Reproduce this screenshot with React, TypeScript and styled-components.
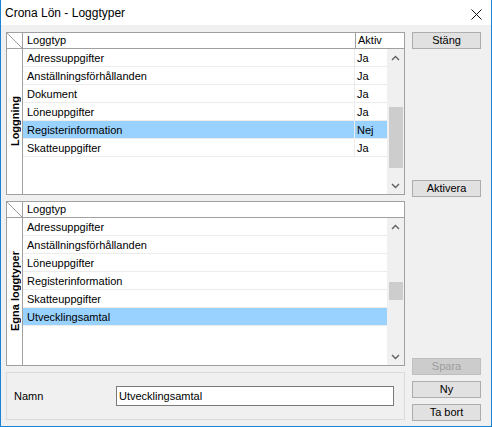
import React from "react";
import styled, { createGlobalStyle } from "styled-components";

const GlobalStyle = createGlobalStyle`
  html, body {
    margin: 0;
    padding: 0;
    background: #ffffff;
  }
  body {
    font-family: "Liberation Sans", Arial, sans-serif;
    font-size: 11px;
    color: #000000;
  }
`;

type LogRow = {
  name: string;
  active?: string;
  selected?: boolean;
};

const loggning: LogRow[] = [
  { name: "Adressuppgifter", active: "Ja" },
  { name: "Anställningsförhållanden", active: "Ja" },
  { name: "Dokument", active: "Ja" },
  { name: "Löneuppgifter", active: "Ja" },
  { name: "Registerinformation", active: "Nej", selected: true },
  { name: "Skatteuppgifter", active: "Ja" },
];

const egna: LogRow[] = [
  { name: "Adressuppgifter" },
  { name: "Anställningsförhållanden" },
  { name: "Löneuppgifter" },
  { name: "Registerinformation" },
  { name: "Skatteuppgifter" },
  { name: "Utvecklingsamtal", selected: true },
];

type GridProps = {
  label: string;
  rows: LogRow[];
  height: number;
  withActive?: boolean;
  thumbTop: number;
  thumbSize: number;
};

const LogGrid: React.FC<GridProps> = ({
  label,
  rows,
  height,
  withActive,
  thumbTop,
  thumbSize,
}) => {
  return (
    <GridBox $height={height}>
      <Corner>
        <svg width="15" height="15" viewBox="0 0 15 15">
          <line x1="0" y1="0" x2="15" y2="15" stroke="#a0a0a0" strokeWidth="1" />
        </svg>
      </Corner>
      <HeaderRow>
        <HeaderCell>Loggtyp</HeaderCell>
        {withActive && <ActiveHeader>Aktiv</ActiveHeader>}
      </HeaderRow>
      <RowHeader>
        <VerticalLabel>{label}</VerticalLabel>
      </RowHeader>
      <BodyArea>
        <Rows>
          {rows.map((r, idx) => (
            <Row key={idx} $selected={r.selected}>
              <NameCell $full={!withActive}>{r.name}</NameCell>
              {withActive && <ActiveCell>{r.active}</ActiveCell>}
            </Row>
          ))}
        </Rows>
        <ScrollBar>
          <ScrollArrow>
            <svg width="9" height="6" viewBox="0 0 9 6">
              <polyline points="1,5 4.5,1.5 8,5" fill="none" stroke="#606060" strokeWidth="1.4" />
            </svg>
          </ScrollArrow>
          <Track>
            <Thumb $top={thumbTop} $size={thumbSize} />
          </Track>
          <ScrollArrow>
            <svg width="9" height="6" viewBox="0 0 9 6">
              <polyline points="1,1 4.5,4.5 8,1" fill="none" stroke="#606060" strokeWidth="1.4" />
            </svg>
          </ScrollArrow>
        </ScrollBar>
      </BodyArea>
    </GridBox>
  );
};

const App: React.FC = () => {
  return (
    <>
      <GlobalStyle />
      <Window>
        <TitleBar>
          <Title>Crona Lön - Loggtyper</Title>
          <CloseIcon>
            <svg width="11" height="11" viewBox="0 0 11 11">
              <line x1="0.5" y1="0.5" x2="10.5" y2="10.5" stroke="#111" strokeWidth="1" />
              <line x1="10.5" y1="0.5" x2="0.5" y2="10.5" stroke="#111" strokeWidth="1" />
            </svg>
          </CloseIcon>
        </TitleBar>
        <Body>
          <LeftColumn>
            <LogGrid
              label="Loggning"
              rows={loggning}
              height={163}
              withActive
              thumbTop={41}
              thumbSize={61}
            />
            <LogGrid
              label="Egna loggtyper"
              rows={egna}
              height={165}
              thumbTop={47}
              thumbSize={18}
            />
            <NamePanel>
              <NameLabel>Namn</NameLabel>
              <NameInput defaultValue="Utvecklingsamtal" />
            </NamePanel>
          </LeftColumn>
          <RightColumn>
            <Button>Stäng</Button>
            <Button $top={131}>Aktivera</Button>
            <BottomButtons>
              <Button disabled>Spara</Button>
              <Button>Ny</Button>
              <Button>Ta bort</Button>
            </BottomButtons>
          </RightColumn>
        </Body>
      </Window>
    </>
  );
};

export default App;

const Window = styled.div`
  width: 492px;
  height: 427px;
  box-sizing: border-box;
  border: 1px solid #1883d7;
  border-top: none;
  display: flex;
  flex-direction: column;
  background: #f0f0f0;
`;

const TitleBar = styled.div`
  height: 25px;
  flex: none;
  background: #ffffff;
  display: flex;
  align-items: center;
  justify-content: space-between;
  padding: 0 9px 0 4px;
`;

const Title = styled.div`
  font-size: 12px;
  margin-top: 1px;
`;

const CloseIcon = styled.div`
  display: flex;
  margin-top: 3px;
`;

const Body = styled.div`
  flex: 1;
  display: flex;
  gap: 7px;
  padding: 7px 0 5px 5px;
`;

const LeftColumn = styled.div`
  width: 399px;
  display: flex;
  flex-direction: column;
  gap: 6px;
`;

const GridBox = styled.div<{ $height: number }>`
  height: ${(p) => p.$height}px;
  box-sizing: border-box;
  border: 1px solid #a0a0a0;
  background: #ffffff;
  display: grid;
  grid-template-columns: 16px 1fr;
  grid-template-rows: 16px 1fr;
`;

const Corner = styled.div`
  box-sizing: border-box;
  border-right: 1px solid #a0a0a0;
  border-bottom: 1px solid #a0a0a0;
  overflow: hidden;
  display: flex;
`;

const HeaderRow = styled.div`
  box-sizing: border-box;
  border-bottom: 1px solid #a0a0a0;
  display: flex;
`;

const HeaderCell = styled.div`
  flex: 1;
  padding-left: 4px;
  line-height: 15px;
`;

const ActiveHeader = styled.div`
  width: 49px;
  border-left: 1px solid #a0a0a0;
  padding-left: 2px;
  box-sizing: border-box;
  line-height: 15px;
`;

const RowHeader = styled.div`
  box-sizing: border-box;
  border-right: 1px solid #a0a0a0;
  display: flex;
  align-items: center;
  justify-content: center;
`;

const VerticalLabel = styled.div`
  writing-mode: vertical-rl;
  transform: rotate(180deg);
  font-weight: bold;
  font-size: 11px;
  white-space: nowrap;
`;

const BodyArea = styled.div`
  display: flex;
  min-height: 0;
`;

const Rows = styled.div`
  flex: 1;
  display: flex;
  flex-direction: column;
`;

const Row = styled.div<{ $selected?: boolean }>`
  height: 18px;
  box-sizing: border-box;
  border-bottom: 1px solid #ececec;
  background: ${(p) => (p.$selected ? "#99d1ff" : "#ffffff")};
  display: flex;
  align-items: center;
`;

const NameCell = styled.div<{ $full?: boolean }>`
  width: ${(p) => (p.$full ? "auto" : "331px")};
  flex: ${(p) => (p.$full ? 1 : "none")};
  padding-left: 4px;
  box-sizing: border-box;
  white-space: nowrap;
`;

const ActiveCell = styled.div`
  flex: 1;
  align-self: stretch;
  display: flex;
  align-items: center;
  border-left: 1px solid #ececec;
  padding-left: 2px;
`;

const ScrollBar = styled.div`
  width: 17px;
  flex: none;
  background: #f0f0f0;
  display: flex;
  flex-direction: column;
`;

const ScrollArrow = styled.div`
  height: 17px;
  flex: none;
  display: flex;
  align-items: center;
  justify-content: center;
`;

const Track = styled.div`
  flex: 1;
  display: flex;
  flex-direction: column;
`;

const Thumb = styled.div<{ $top: number; $size: number }>`
  margin: ${(p) => p.$top}px 1px 0 2px;
  height: ${(p) => p.$size}px;
  background: #cdcdcd;
`;

const NamePanel = styled.div`
  height: 48px;
  box-sizing: border-box;
  border: 1px solid #dadada;
  display: flex;
  align-items: center;
  padding: 0 10px 1px 7px;
`;

const NameLabel = styled.div`
  width: 102px;
  flex: none;
`;

const NameInput = styled.input`
  flex: 1;
  height: 20px;
  box-sizing: border-box;
  border: 1px solid #7a7a7a;
  background: #ffffff;
  padding: 0 2px;
  font-family: "Liberation Sans", Arial, sans-serif;
  font-size: 11px;
  color: #000000;
  outline: none;
`;

const RightColumn = styled.div`
  width: 69px;
  display: flex;
  flex-direction: column;
`;

const BottomButtons = styled.div`
  margin-top: auto;
  display: flex;
  flex-direction: column;
  gap: 6px;
`;

const Button = styled.button<{ $top?: number }>`
  height: 17px;
  margin-top: ${(p) => p.$top ?? 0}px;
  box-sizing: border-box;
  border: 1px solid #adadad;
  background: #e1e1e1;
  padding: 0;
  font-family: "Liberation Sans", Arial, sans-serif;
  font-size: 11px;
  color: #000000;
  line-height: 15px;

  &:disabled {
    background: #cccccc;
    border-color: #bfbfbf;
    color: #9d9d9d;
  }
`;
